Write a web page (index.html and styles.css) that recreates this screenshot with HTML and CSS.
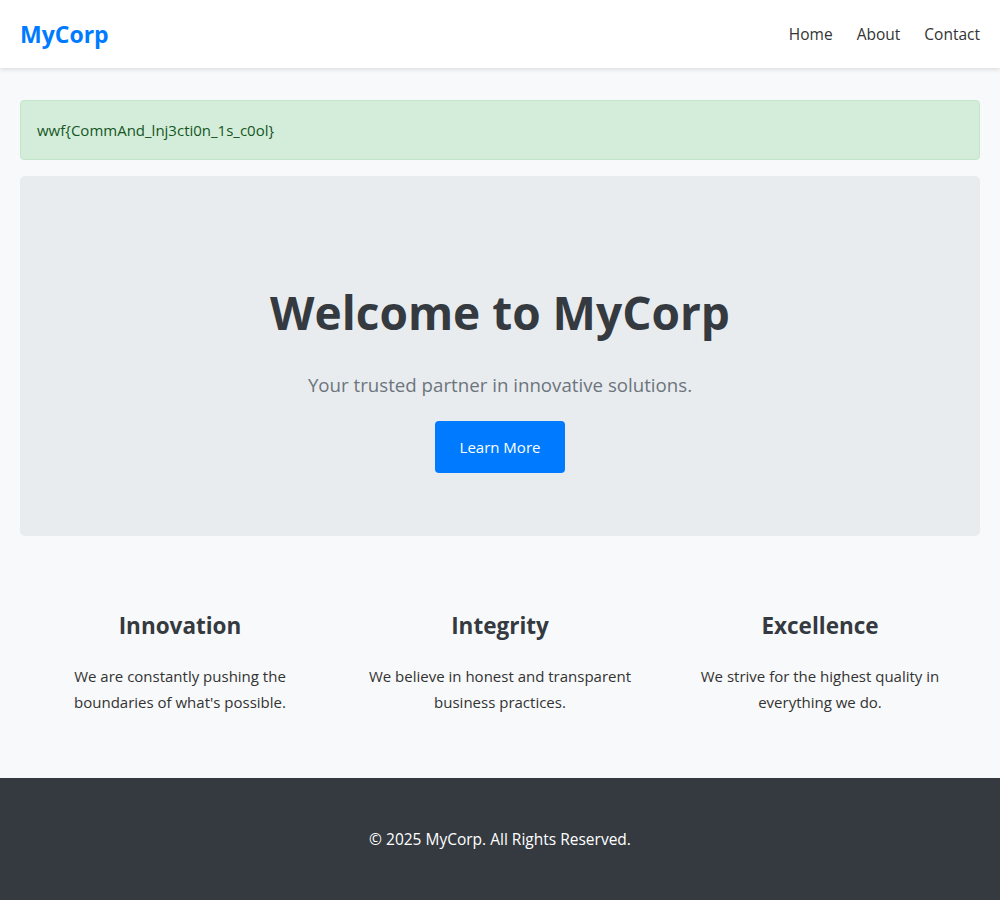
FILE: index.html
```html
<!DOCTYPE html>
<html lang="en">
<head>
<meta charset="utf-8">
<title>MyCorp</title>
<link rel="stylesheet" href="styles.css">
</head>
<body>
<header class="site-header">
  <div class="logo">MyCorp</div>
  <nav class="nav">
    <a href="#">Home</a>
    <a href="#">About</a>
    <a href="#">Contact</a>
  </nav>
</header>
<main class="main">
  <div class="alert">wwf{CommAnd_lnj3cti0n_1s_c0ol}</div>
  <section class="hero">
    <h1 class="hero-title">Welcome to MyCorp</h1>
    <p class="hero-sub">Your trusted partner in innovative solutions.</p>
    <a href="#" class="btn">Learn More</a>
  </section>
  <section class="features">
    <div class="feature">
      <h2>Innovation</h2>
      <p>We are constantly pushing the boundaries of what's possible.</p>
    </div>
    <div class="feature">
      <h2>Integrity</h2>
      <p>We believe in honest and transparent business practices.</p>
    </div>
    <div class="feature">
      <h2>Excellence</h2>
      <p>We strive for the highest quality in everything we do.</p>
    </div>
  </section>
</main>
<footer class="footer">
  <p>&copy; 2025 MyCorp. All Rights Reserved.</p>
</footer>
</body>
</html>
```
FILE: styles.css
```css
* { box-sizing: border-box; }
html, body { margin: 0; padding: 0; }
body {
  font-family: "Open Sans", "Noto Sans", sans-serif;
  font-size: 15px;
  line-height: 26px;
  color: #333;
  background: #f8f9fa;
}
.site-header {
  height: 68px;
  background: #fff;
  box-shadow: 0 2px 4px rgba(0,0,0,0.1);
  display: flex;
  align-items: center;
  justify-content: space-between;
  padding: 0 20px;
}
.logo {
  font-size: 23px;
  font-weight: 700;
  color: #007bff;
}
.nav { display: flex; gap: 24px; }
.nav a { color: #333; text-decoration: none; font-size: 15.5px; }
.main { padding: 32px 20px 0; }
.alert {
  background: #d4edda;
  border: 1px solid #c3e6cb;
  color: #155724;
  border-radius: 4px;
  padding: 16px;
  height: 60px;
  margin-bottom: 16px;
}
.hero {
  background: #e9ecef;
  border-radius: 5px;
  height: 360px;
  padding: 109px 20px 0;
  text-align: center;
}
.hero-title {
  margin: 0 0 30px;
  font-size: 46px;
  line-height: 1.2;
  font-weight: 700;
  color: #343a40;
}
.hero-sub {
  margin: 0 0 21px;
  font-size: 18.7px;
  line-height: 30px;
  color: #6c757d;
}
.btn {
  display: inline-block;
  background: #007bff;
  color: #fff;
  text-decoration: none;
  font-size: 15px;
  line-height: 26px;
  padding: 13px 25px;
  border-radius: 4px;
}
.features {
  display: grid;
  grid-template-columns: repeat(3, 1fr);
  padding: 76px 0 63px;
}
.feature { padding: 0 20px; text-align: center; }
.feature h2 {
  margin: 0 0 24px;
  font-size: 22.5px;
  line-height: 1.2;
  color: #343a40;
}
.feature p { margin: 0; }
.footer {
  background: #343a40;
  color: #fff;
  text-align: center;
  padding: 48px 20px 0;
  height: 122px;
}
.footer p { margin: 0; font-size: 15.5px; }
```
